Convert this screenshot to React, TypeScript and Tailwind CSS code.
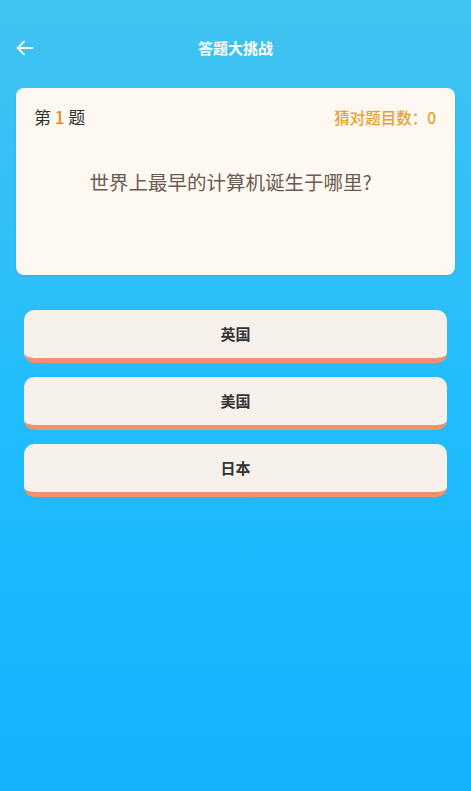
import React from "react";

const options = ["英国", "美国", "日本"];

export default function App() {
    return (
        <div
            className="min-h-[791px] w-full bg-gradient-to-b from-[#40c3f0] via-[#22bdfd] to-[#12b2fd]"
            style={{fontFamily: '"Noto Sans CJK SC", "Noto Sans", sans-serif'}}
        >
            {/* header */}
            <div className="relative h-[96px] flex items-start justify-center pt-[36px]">
                <button className="absolute left-[14px] top-[37px] text-white">
                    <svg width="22" height="22" viewBox="0 0 24 24" fill="none" stroke="currentColor" strokeWidth="2" strokeLinecap="round" strokeLinejoin="round">
                        <path d="M20 12H4"/>
                        <path d="M11 5l-7 7 7 7"/>
                    </svg>
                </button>
                <h1 className="text-white font-bold text-[15px] leading-[24px]">答题大挑战</h1>
            </div>

            <div className="px-[16px] -mt-[8px]">
                {/* question card */}
                <div className="bg-[#fdf9f1] rounded-[8px] h-[187px] px-[18px] pt-[16px] shadow-[0_1px_2px_rgba(0,0,0,0.08)]">
                    <div className="flex justify-between items-center">
                        <span className="text-[17px] text-[#333] leading-[26px]">
                            第 <span className="text-[#e9892a] font-medium">1</span> 题
                        </span>
                        <span className="text-[15.5px] text-[#e9a032] font-medium leading-[26px] pr-[1px]">猜对题目数：0</span>
                    </div>
                    <p className="text-center text-[19.5px] text-[#6b5a52] mt-[38px] leading-[28px] pr-[10px]">
                        世界上最早的计算机诞生于哪里?
                    </p>
                </div>

                {/* options */}
                <div className="flex flex-col gap-[14px] mt-[35px] px-[8px]">
                    {options.map((o) => (
                        <button
                            key={o}
                            className="h-[53px] bg-[#f7f1ec] rounded-[10px] border-b-[5px] border-[#f4906a] font-bold text-[15px] text-[#333]"
                        >
                            {o}
                        </button>
                    ))}
                </div>
            </div>
        </div>
    );
}
